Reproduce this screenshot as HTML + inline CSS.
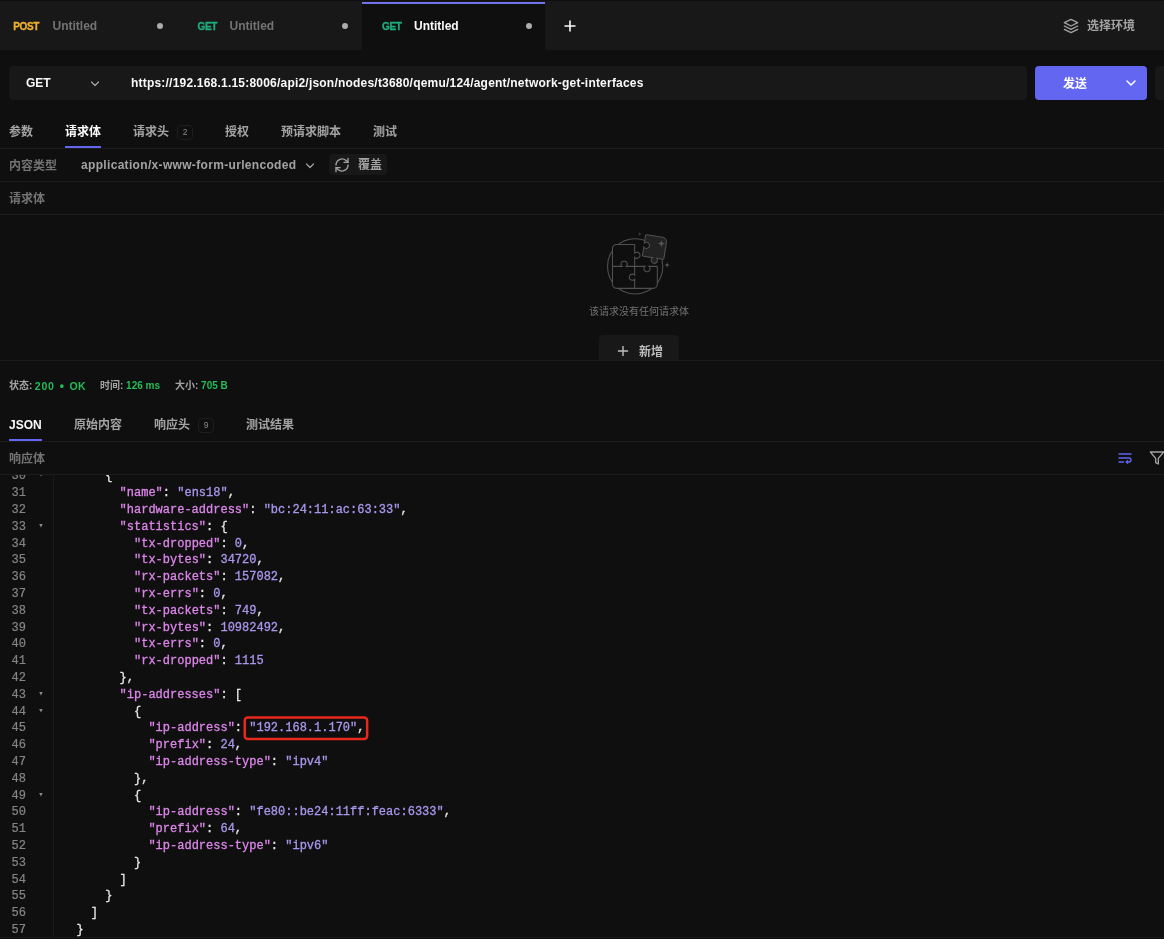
<!DOCTYPE html>
<html lang="zh-CN">
<head>
<meta charset="utf-8">
<title>Hoppscotch</title>
<style>
*{box-sizing:border-box;margin:0;padding:0}
html,body{width:1164px;height:939px;overflow:hidden;background:#0f0f0f}
body{position:relative;font-family:"Liberation Sans","Noto Sans CJK SC",sans-serif;font-size:12px;color:#a3a3a3;-webkit-font-smoothing:antialiased}
#root{position:absolute;left:0;top:0;width:1164px;height:939px;overflow:hidden;will-change:transform}
.abs{position:absolute;white-space:nowrap}
.t{position:absolute;white-space:nowrap;line-height:16px;height:16px}
.b{font-weight:700}
.hl{position:absolute;left:0;width:1164px;height:1px;background:#1b1b1b}
.white{color:#fafafa}
.gray{color:#737373}
.green{color:#22bd58}
/* tab bar */
#tabbar{position:absolute;left:0;top:0;width:1164px;height:50px;background:#181818;border-top:1px solid #0f0f0f}
#tab3{position:absolute;left:362px;top:2px;width:183px;height:48px;background:#0f0f0f;border-top:2px solid #7073ec}
.dot{position:absolute;width:6px;height:6px;border-radius:50%;background:#adadad}
.meth{font-size:10px;font-weight:700;letter-spacing:-0.35px;-webkit-text-stroke:0.3px currentColor}
/* url bar */
#urlbar{position:absolute;left:9px;top:66px;width:1018px;height:34px;background:#181818;border-radius:4px}
#send{position:absolute;left:1035px;top:66px;width:112px;height:34px;background:#6366f1;border-radius:4px}
#savebtn{position:absolute;left:1155px;top:66px;width:20px;height:34px;background:#181818;border-radius:4px}
.badge{position:absolute;height:15px;width:16px;border:1px solid #1e1e1e;border-radius:4px;font-size:8.5px;line-height:13px;text-align:center;color:#8a8a8a}
.uline{position:absolute;height:2px;background:#6366f1}
.btn{position:absolute;background:#181818;border-radius:4px}
/* code */
#editor{position:absolute;left:0;top:474px;width:1164px;height:465px;overflow:hidden;background:#0f0f0f;border-top:1px solid #1b1b1b}
#gutter{position:absolute;left:0;top:0;width:54px;height:465px;background:#0f0f0f;border-right:1px solid #1a1a1a}
#code,#lnums,#folds{position:absolute;font-family:"Liberation Mono","DejaVu Sans Mono",monospace;font-size:12px;line-height:16.8px;white-space:pre}
#code{left:62px;top:-6.6px;color:#e5e5e5;-webkit-text-stroke:0.3px currentColor}
#lnums{left:11.5px;top:-6.6px;color:#858585;-webkit-text-stroke:0.2px currentColor}
#folds{left:38.2px;top:-7.6px;color:#8a8a8a;font-size:9px}
.k{color:#dc86ea}
.s{color:#aa96ec}
#redbox{position:absolute;border:2px solid #e02424;border-radius:3px}
</style>
</head>
<body>
<div id="root">
<!-- TAB BAR -->
<div id="tabbar"></div>
<div id="tab3"></div>
<div class="t meth" style="left:13.3px;top:19px;color:#f0b02e">POST</div>
<div class="t b gray" style="left:52.5px;top:18px">Untitled</div>
<div class="dot" style="left:157px;top:23px"></div>
<div class="t meth" style="left:197.5px;top:19px;color:#1fae7c">GET</div>
<div class="t b gray" style="left:229.5px;top:18px">Untitled</div>
<div class="dot" style="left:342px;top:23px"></div>
<div class="t meth" style="left:382px;top:19px;color:#1fae7c">GET</div>
<div class="t b white" style="left:414px;top:18px">Untitled</div>
<div class="dot" style="left:526px;top:23px"></div>
<svg class="abs" style="left:563px;top:19px" width="14" height="14" viewBox="0 0 14 14"><path d="M7 1.5v11M1.5 7h11" stroke="#fafafa" stroke-width="1.6" fill="none"/></svg>
<svg class="abs" style="left:1063px;top:17.5px" width="16" height="16" viewBox="0 0 24 24" fill="none" stroke="#a3a3a3" stroke-width="2" stroke-linecap="round" stroke-linejoin="round"><path d="M12 2 2 7l10 5 10-5-10-5z"/><path d="m2 12 10 5 10-5"/><path d="m2 17 10 5 10-5"/></svg>
<div class="t b" style="left:1087px;top:18px">选择环境</div>

<!-- URL BAR -->
<div id="urlbar"></div>
<div class="t b white" style="left:26px;top:75px">GET</div>
<svg class="abs" style="left:89px;top:77.5px" width="12" height="12" viewBox="0 0 24 24" fill="none" stroke="#a3a3a3" stroke-width="2.4" stroke-linecap="round" stroke-linejoin="round"><path d="m5 8 7 7 7-7"/></svg>
<div class="t b white" id="url" style="left:131px;top:75px;letter-spacing:0.209px">https://192.168.1.15:8006/api2/json/nodes/t3680/qemu/124/agent/network-get-interfaces</div>
<div id="send"></div>
<div class="t b" style="left:1063px;top:75.6px;color:#fff">发送</div>
<svg class="abs" style="left:1123.1px;top:75.3px" width="16" height="16" viewBox="0 0 24 24" fill="none" stroke="#ffffff" stroke-width="2.2" stroke-linecap="round" stroke-linejoin="round"><path d="m6 9 6 6 6-6"/></svg>
<div id="savebtn"></div>

<!-- REQUEST TABS -->
<div class="t b" style="left:9px;top:124px">参数</div>
<div class="t b white" style="left:65px;top:124px">请求体</div>
<div class="t b" style="left:133px;top:124px">请求头</div>
<div class="badge" style="left:177px;top:125px">2</div>
<div class="t b" style="left:225px;top:124px">授权</div>
<div class="t b" style="left:281px;top:124px">预请求脚本</div>
<div class="t b" style="left:373px;top:124px">测试</div>
<div class="hl" style="top:148px"></div>
<div class="uline" style="left:65px;top:146px;width:36px"></div>

<!-- CONTENT TYPE -->
<div class="t b gray" style="left:9px;top:158px">内容类型</div>
<div class="t b" style="left:81px;top:157px;letter-spacing:0.325px" id="ctype">application/x-www-form-urlencoded</div>
<svg class="abs" style="left:303.5px;top:160px" width="12" height="12" viewBox="0 0 24 24" fill="none" stroke="#a3a3a3" stroke-width="2.4" stroke-linecap="round" stroke-linejoin="round"><path d="m5 8 7 7 7-7"/></svg>
<div class="btn" style="left:329px;top:154px;width:58px;height:21px"></div>
<svg class="abs" style="left:334px;top:157px" width="16" height="16" viewBox="0 0 24 24" fill="none" stroke="#a3a3a3" stroke-width="2" stroke-linecap="round" stroke-linejoin="round"><path d="M21 2v6h-6"/><path d="M3 12a9 9 0 0 1 15-6.7L21 8"/><path d="M3 22v-6h6"/><path d="M21 12a9 9 0 0 1-15 6.7L3 16"/></svg>
<div class="t b" style="left:358px;top:157px">覆盖</div>
<div class="hl" style="top:181px"></div>
<div class="t b gray" style="left:9px;top:191px">请求体</div>
<div class="hl" style="top:214px"></div>

<!-- EMPTY STATE -->
<svg class="abs" style="left:580px;top:220px" width="120" height="80" viewBox="0 0 1164 776" fill="none" stroke="#505050" stroke-width="10.5">
<circle cx="535" cy="450" r="268"/>
<path d="M750 450V623A40 40 0 0 1 710 663H355A40 40 0 0 1 315 623V277A40 40 0 0 1 355 237H530" fill="#0f0f0f"/>
<path d="M530 237V322A30 30 0 1 1 530 362V535A30 30 0 1 0 530 575V663" />
<path d="M315 450H408A30 30 0 1 1 448 450H630A30 30 0 1 0 670 450H750"/>
<g transform="translate(725 262) rotate(9)"><path d="M-95 -105H60A45 45 0 0 1 105 -60V95A10 10 0 0 1 95 105H36A30 30 0 1 1 -4 105H-95A10 10 0 0 1 -105 95V17A30 30 0 1 0 -105 -23V-95A10 10 0 0 1 -95 -105Z" fill="#222222"/></g>
<g stroke="none" fill="#555555">
<path d="M790 190Q790 230 830 230Q790 230 790 270Q790 230 750 230Q790 230 790 190Z"/>
<path d="M580 117Q580 137 600 137Q580 137 580 157Q580 137 560 137Q580 137 580 117Z" fill="#3d3d3d"/>
<path d="M845 405Q845 437 877 437Q845 437 845 469Q845 437 813 437Q845 437 845 405Z"/>
</g>
</svg>
<div class="t gray" style="left:589px;top:304px;font-size:10px">该请求没有任何请求体</div>
<div class="btn" style="left:599px;top:335px;width:80px;height:34px"></div>
<svg class="abs" style="left:616.2px;top:344.3px" width="14" height="14" viewBox="0 0 14 14"><path d="M7 1.9v10.2M1.9 7h10.2" stroke="#bdbdbd" stroke-width="1.4" fill="none"/></svg>
<div class="t b" style="left:639px;top:344px;color:#bdbdbd">新增</div>

<!-- RESPONSE -->
<div class="abs" style="left:0;top:360px;width:1164px;height:114px;background:#0f0f0f;border-top:1px solid #1b1b1b"></div>
<div class="t b" style="left:9px;top:378px;font-size:10px">状态:</div><div class="t b green" style="left:34.8px;top:377.6px;font-size:10.5px;letter-spacing:0.8px">200</div><div class="t b green" style="left:59.8px;top:377.6px;font-size:12px">•</div><div class="t b green" style="left:69.6px;top:377.6px;font-size:10.5px;letter-spacing:0.2px">OK</div>
<div class="t b" style="left:100px;top:378px;font-size:10px"><span>时间: </span><span class="green">126 ms</span></div>
<div class="t b" style="left:175px;top:378px;font-size:10px"><span>大小: </span><span class="green">705 B</span></div>
<div class="t b white" style="left:9px;top:417px">JSON</div>
<div class="t b" style="left:74px;top:417px">原始内容</div>
<div class="t b" style="left:154px;top:417px">响应头</div>
<div class="badge" style="left:198px;top:418px">9</div>
<div class="t b" style="left:246px;top:417px">测试结果</div>
<div class="hl" style="top:441px"></div>
<div class="uline" style="left:9px;top:439px;width:33px"></div>
<div class="t b gray" style="left:9px;top:451px">响应体</div>

<svg class="abs" style="left:1117px;top:450px" width="16" height="16" viewBox="0 0 24 24" fill="none" stroke="#6366f1" stroke-width="2" stroke-linecap="round" stroke-linejoin="round"><line x1="3" x2="21" y1="6" y2="6"/><path d="M3 12h15a3 3 0 1 1 0 6h-4"/><polyline points="16 16 14 18 16 20"/><line x1="3" x2="10" y1="18" y2="18"/></svg>
<svg class="abs" style="left:1149px;top:450px" width="16" height="16" viewBox="0 0 24 24" fill="none" stroke="#a3a3a3" stroke-width="2" stroke-linecap="round" stroke-linejoin="round"><polygon points="22 3 2 3 10 12.46 10 19 14 21 14 12.46 22 3"/></svg>

<!-- EDITOR -->
<div id="editor">
<div class="abs" style="left:0;top:462px;width:1164px;height:3px;background:#0d0d0d;border-top:1px solid #191919;z-index:3"></div>
<div id="gutter"></div>
<div id="lnums">30
31
32
33
34
35
36
37
38
39
40
41
42
43
44
45
46
47
48
49
50
51
52
53
54
55
56
57</div>
<div id="folds">▾
 
 
▾
 
 
 
 
 
 
 
 
 
▾
▾
 
 
 
 
▾
 
 
 
 
 
 
 
 </div>
<svg class="abs" style="left:240px;top:237px" width="134" height="32" viewBox="0 0 134 32" fill="none"><rect x="4.75" y="5.55" width="122.4" height="21.5" rx="3" stroke="#e8281c" stroke-width="2.5"/></svg>
<div id="code">      {
        <span class="k">&quot;name&quot;</span>: <span class="s">&quot;ens18&quot;</span>,
        <span class="k">&quot;hardware-address&quot;</span>: <span class="s">&quot;bc:24:11:ac:63:33&quot;</span>,
        <span class="k">&quot;statistics&quot;</span>: {
          <span class="k">&quot;tx-dropped&quot;</span>: <span class="s">0</span>,
          <span class="k">&quot;tx-bytes&quot;</span>: <span class="s">34720</span>,
          <span class="k">&quot;rx-packets&quot;</span>: <span class="s">157082</span>,
          <span class="k">&quot;rx-errs&quot;</span>: <span class="s">0</span>,
          <span class="k">&quot;tx-packets&quot;</span>: <span class="s">749</span>,
          <span class="k">&quot;rx-bytes&quot;</span>: <span class="s">10982492</span>,
          <span class="k">&quot;tx-errs&quot;</span>: <span class="s">0</span>,
          <span class="k">&quot;rx-dropped&quot;</span>: <span class="s">1115</span>
        },
        <span class="k">&quot;ip-addresses&quot;</span>: [
          {
            <span class="k">&quot;ip-address&quot;</span>: <span class="s">&quot;192.168.1.170&quot;</span>,
            <span class="k">&quot;prefix&quot;</span>: <span class="s">24</span>,
            <span class="k">&quot;ip-address-type&quot;</span>: <span class="s">&quot;ipv4&quot;</span>
          },
          {
            <span class="k">&quot;ip-address&quot;</span>: <span class="s">&quot;fe80::be24:11ff:feac:6333&quot;</span>,
            <span class="k">&quot;prefix&quot;</span>: <span class="s">64</span>,
            <span class="k">&quot;ip-address-type&quot;</span>: <span class="s">&quot;ipv6&quot;</span>
          }
        ]
      }
    ]
  }</div>
</div>
</div>
</body>
</html>
